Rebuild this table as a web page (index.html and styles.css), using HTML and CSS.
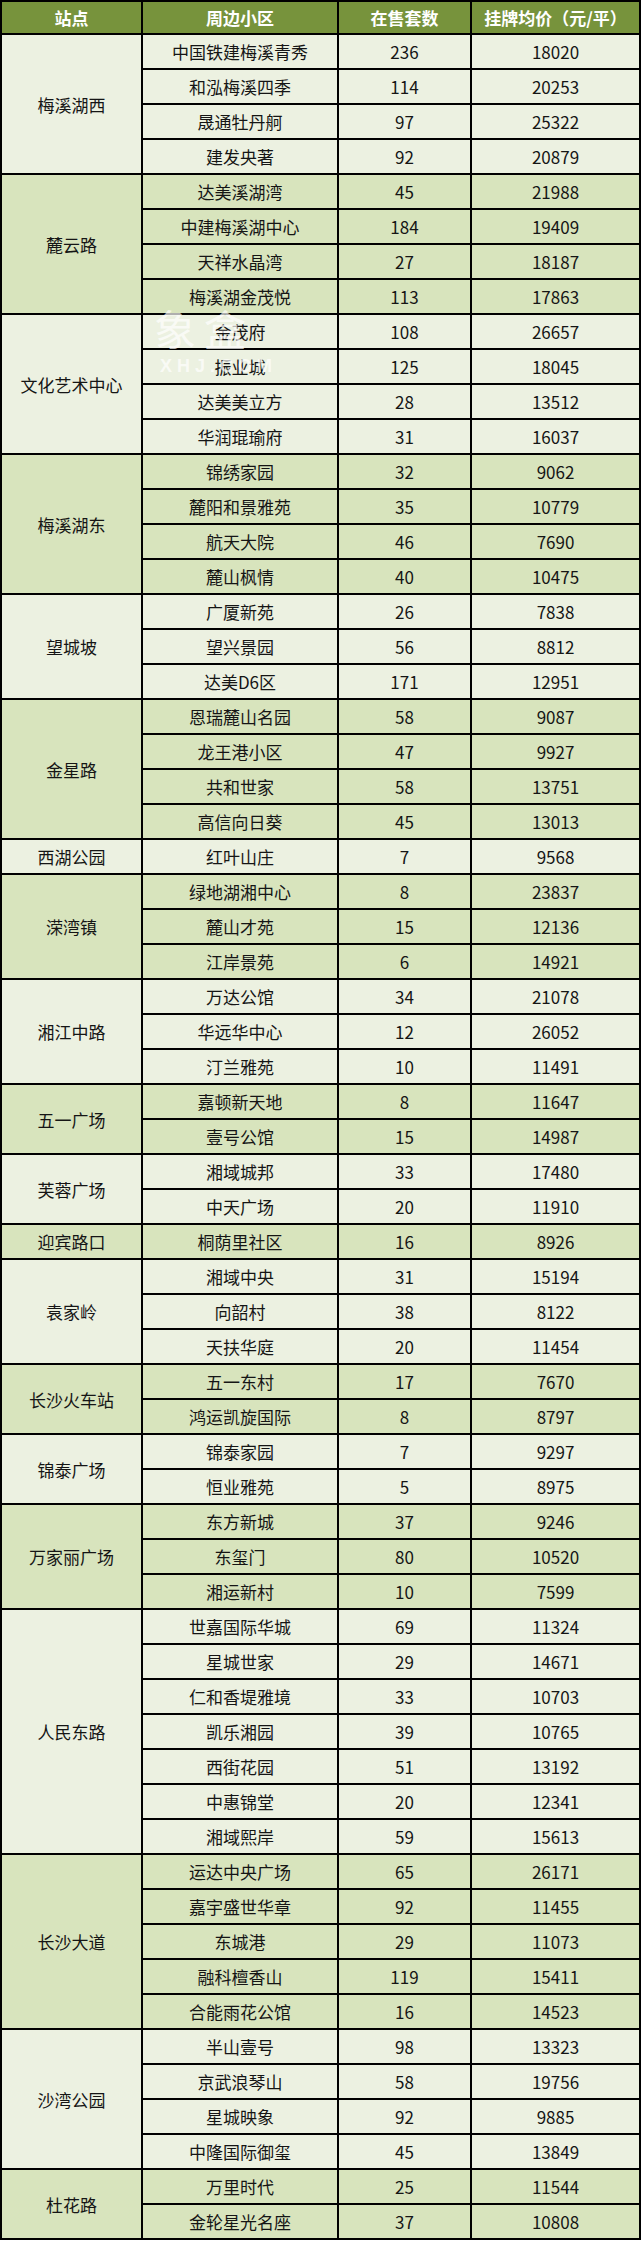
FILE: index.html
```html
<!DOCTYPE html>
<html lang="zh-CN">
<head>
<meta charset="utf-8">
<title>地铁站点周边小区挂牌均价</title>
<link rel="stylesheet" href="styles.css">
</head>
<body>
<div class="wrap">
<table class="price">
<colgroup><col class="c1"><col class="c2"><col class="c3"><col class="c4"></colgroup>
<thead>
<tr><th>站点</th><th>周边小区</th><th>在售套数</th><th>挂牌均价（元/平）</th></tr>
</thead>
<tbody>
<tr class="lt"><td rowspan="4">梅溪湖西</td><td>中国铁建梅溪青秀</td><td>236</td><td>18020</td></tr>
<tr class="lt"><td>和泓梅溪四季</td><td>114</td><td>20253</td></tr>
<tr class="lt"><td>晟通牡丹舸</td><td>97</td><td>25322</td></tr>
<tr class="lt"><td>建发央著</td><td>92</td><td>20879</td></tr>
<tr class="dk"><td rowspan="4">麓云路</td><td>达美溪湖湾</td><td>45</td><td>21988</td></tr>
<tr class="dk"><td>中建梅溪湖中心</td><td>184</td><td>19409</td></tr>
<tr class="dk"><td>天祥水晶湾</td><td>27</td><td>18187</td></tr>
<tr class="dk"><td>梅溪湖金茂悦</td><td>113</td><td>17863</td></tr>
<tr class="lt"><td rowspan="4">文化艺术中心</td><td>金茂府</td><td>108</td><td>26657</td></tr>
<tr class="lt"><td>振业城</td><td>125</td><td>18045</td></tr>
<tr class="lt"><td>达美美立方</td><td>28</td><td>13512</td></tr>
<tr class="lt"><td>华润琨瑜府</td><td>31</td><td>16037</td></tr>
<tr class="dk"><td rowspan="4">梅溪湖东</td><td>锦绣家园</td><td>32</td><td>9062</td></tr>
<tr class="dk"><td>麓阳和景雅苑</td><td>35</td><td>10779</td></tr>
<tr class="dk"><td>航天大院</td><td>46</td><td>7690</td></tr>
<tr class="dk"><td>麓山枫情</td><td>40</td><td>10475</td></tr>
<tr class="lt"><td rowspan="3">望城坡</td><td>广厦新苑</td><td>26</td><td>7838</td></tr>
<tr class="lt"><td>望兴景园</td><td>56</td><td>8812</td></tr>
<tr class="lt"><td>达美D6区</td><td>171</td><td>12951</td></tr>
<tr class="dk"><td rowspan="4">金星路</td><td>恩瑞麓山名园</td><td>58</td><td>9087</td></tr>
<tr class="dk"><td>龙王港小区</td><td>47</td><td>9927</td></tr>
<tr class="dk"><td>共和世家</td><td>58</td><td>13751</td></tr>
<tr class="dk"><td>高信向日葵</td><td>45</td><td>13013</td></tr>
<tr class="lt"><td>西湖公园</td><td>红叶山庄</td><td>7</td><td>9568</td></tr>
<tr class="dk"><td rowspan="3">溁湾镇</td><td>绿地湖湘中心</td><td>8</td><td>23837</td></tr>
<tr class="dk"><td>麓山才苑</td><td>15</td><td>12136</td></tr>
<tr class="dk"><td>江岸景苑</td><td>6</td><td>14921</td></tr>
<tr class="lt"><td rowspan="3">湘江中路</td><td>万达公馆</td><td>34</td><td>21078</td></tr>
<tr class="lt"><td>华远华中心</td><td>12</td><td>26052</td></tr>
<tr class="lt"><td>汀兰雅苑</td><td>10</td><td>11491</td></tr>
<tr class="dk"><td rowspan="2">五一广场</td><td>嘉顿新天地</td><td>8</td><td>11647</td></tr>
<tr class="dk"><td>壹号公馆</td><td>15</td><td>14987</td></tr>
<tr class="lt"><td rowspan="2">芙蓉广场</td><td>湘域城邦</td><td>33</td><td>17480</td></tr>
<tr class="lt"><td>中天广场</td><td>20</td><td>11910</td></tr>
<tr class="dk"><td>迎宾路口</td><td>桐荫里社区</td><td>16</td><td>8926</td></tr>
<tr class="lt"><td rowspan="3">袁家岭</td><td>湘域中央</td><td>31</td><td>15194</td></tr>
<tr class="lt"><td>向韶村</td><td>38</td><td>8122</td></tr>
<tr class="lt"><td>天扶华庭</td><td>20</td><td>11454</td></tr>
<tr class="dk"><td rowspan="2">长沙火车站</td><td>五一东村</td><td>17</td><td>7670</td></tr>
<tr class="dk"><td>鸿运凯旋国际</td><td>8</td><td>8797</td></tr>
<tr class="lt"><td rowspan="2">锦泰广场</td><td>锦泰家园</td><td>7</td><td>9297</td></tr>
<tr class="lt"><td>恒业雅苑</td><td>5</td><td>8975</td></tr>
<tr class="dk"><td rowspan="3">万家丽广场</td><td>东方新城</td><td>37</td><td>9246</td></tr>
<tr class="dk"><td>东玺门</td><td>80</td><td>10520</td></tr>
<tr class="dk"><td>湘运新村</td><td>10</td><td>7599</td></tr>
<tr class="lt"><td rowspan="7">人民东路</td><td>世嘉国际华城</td><td>69</td><td>11324</td></tr>
<tr class="lt"><td>星城世家</td><td>29</td><td>14671</td></tr>
<tr class="lt"><td>仁和香堤雅境</td><td>33</td><td>10703</td></tr>
<tr class="lt"><td>凯乐湘园</td><td>39</td><td>10765</td></tr>
<tr class="lt"><td>西街花园</td><td>51</td><td>13192</td></tr>
<tr class="lt"><td>中惠锦堂</td><td>20</td><td>12341</td></tr>
<tr class="lt"><td>湘域熙岸</td><td>59</td><td>15613</td></tr>
<tr class="dk"><td rowspan="5">长沙大道</td><td>运达中央广场</td><td>65</td><td>26171</td></tr>
<tr class="dk"><td>嘉宇盛世华章</td><td>92</td><td>11455</td></tr>
<tr class="dk"><td>东城港</td><td>29</td><td>11073</td></tr>
<tr class="dk"><td>融科檀香山</td><td>119</td><td>15411</td></tr>
<tr class="dk"><td>合能雨花公馆</td><td>16</td><td>14523</td></tr>
<tr class="lt"><td rowspan="4">沙湾公园</td><td>半山壹号</td><td>98</td><td>13323</td></tr>
<tr class="lt"><td>京武浪琴山</td><td>58</td><td>19756</td></tr>
<tr class="lt"><td>星城映象</td><td>92</td><td>9885</td></tr>
<tr class="lt"><td>中隆国际御玺</td><td>45</td><td>13849</td></tr>
<tr class="dk"><td rowspan="2">杜花路</td><td>万里时代</td><td>25</td><td>11544</td></tr>
<tr class="dk"><td>金轮星光名座</td><td>37</td><td>10808</td></tr>
</tbody>
</table>
<div class="watermark" aria-hidden="true">
<div class="wm-logo"><span class="wm-a">象</span><span class="wm-b">盒</span></div>
<div class="wm-text">XHJ.COM</div>
</div>
</div>
</body>
</html>
```
FILE: styles.css
```css
html, body {
  margin: 0;
  padding: 0;
  background: #ffffff;
}

.wrap {
  position: relative;
  width: 641px;
}

.price {
  width: 641px;
  table-layout: fixed;
  border-collapse: separate;
  border-spacing: 2px;
  background: #000000;
  font-family: "Noto Sans CJK SC", "Microsoft YaHei", sans-serif;
  font-size: 17px;
  color: #151515;
}

.c1 { width: 139px; }
.c2 { width: 194px; }
.c3 { width: 131px; }
.c4 { width: 167px; }

.price th,
.price td {
  padding: 0;
  text-align: center;
  vertical-align: middle;
  white-space: nowrap;
  overflow: hidden;
}

.price th {
  height: 31px;
  line-height: 31px;
  background: #77933c;
  color: #ffffff;
  font-weight: bold;
  font-size: 17px;
}

.price td {
  height: 33px;
  line-height: 33px;
}

.lt td { background: #ecf1e1; }
.dk td { background: #d8e4bd; }

.watermark {
  position: absolute;
  left: 154px;
  top: 302px;
  color: rgba(255, 255, 255, 0.7);
  pointer-events: none;
  font-family: "Noto Sans CJK SC", sans-serif;
}

.wm-logo {
  display: flex;
  gap: 8px;
  font-size: 42px;
  line-height: 52px;
}

.wm-text {
  font-family: "Liberation Sans", Arial, sans-serif;
  font-size: 18px;
  font-weight: bold;
  letter-spacing: 5px;
  line-height: 20px;
  margin-top: 2px;
  padding-left: 6px;
}
```
